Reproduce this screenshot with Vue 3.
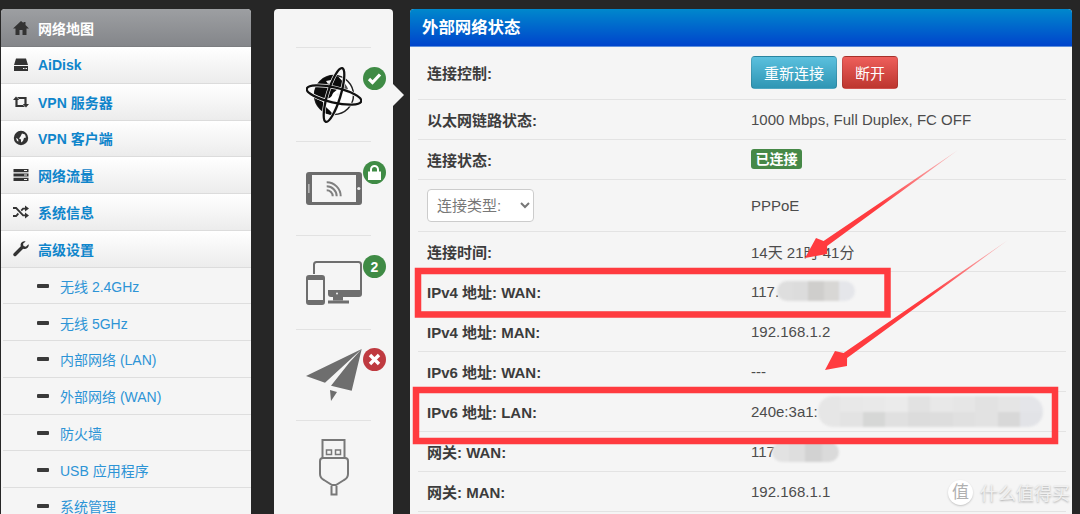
<script setup>
const menu = [
  { label: "网络地图", active: true, icon: "M8 1 0 8.5h2.5V15h4v-5h3v5h4V8.5H16l-3.5-3.5V2h-2v1z" },
  { label: "AiDisk", icon: "M3 1.5h10L15 8H1zM1 9h14v5H1zM10 11v1h1.5v-1zM12.5 11v1H14v-1z" },
  { label: "VPN 服务器", icon: "M3 2.5 6.2 6H4.6v5H10l2 2H2.4V6H0zM13 13.5 9.8 10h1.6V5H6L4 3h9.6v7H16z" },
  { label: "VPN 客户端", icon: "M8 .8a7.2 7.2 0 1 0 0 14.4A7.2 7.2 0 0 0 8 .8zM9 3.5l3 1 1 3-2 .5-1 3-2 1.5v-3L6 8.5 7.5 6.5zM3 8l2 1 .5 2.5L4 11z" },
  { label: "网络流量", icon: "M.5 2h15v3.2H.5zM.5 6.4h15v3.2H.5zM.5 10.8h15V14H.5zM11 3v1h3V3zM11 7.500v1h3v-1zM11 11.900v1h3v-1z" },
  { label: "系统信息", icon: "M0 3h3.500l7 7.500H12V8.500L16 11.500 12 14.500v-2.200H9.700L2.800 5H0zM0 11h2.800l2-2.200L6 10.200 3.500 13H0zM9.700 3.700H12V1.500L16 4.500 12 7.500V5.500H10.500L8.800 7.300 7.600 6z" },
  { label: "高级设置", icon: "M15.500 3.200 12.800 5.700 10.500 5 10 2.800 12.600.4C10.500-.3 8.200.8 7.700 3c-.2.8-.1 1.600.1 2.300L.8 12.300c-.8.800-.8 1.800 0 2.500.7.700 1.700.7 2.400 0l7-7c2.600.7 5.200-.7 5.500-3.200.1-.5 0-1 -.2-1.400z" }
];

const subMenu = ["无线 2.4GHz", "无线 5GHz", "内部网络 (LAN)", "外部网络 (WAN)", "防火墙", "USB 应用程序", "系统管理"];

const rows = [
  { label: "以太网链路状态:", value: "1000 Mbps, Full Duplex, FC OFF" },
  { label: "连接状态:", tag: "已连接" },
  { label: "连接类型:", value: "PPPoE", select: true },
  { label: "连接时间:", value: "14天 21时 41分" },
  { label: "IPv4 地址: WAN:", value: "117.", smear: "wan4" },
  { label: "IPv4 地址: MAN:", value: "192.168.1.2" },
  { label: "IPv6 地址: WAN:", value: "---" },
  { label: "IPv6 地址: LAN:", value: "240e:3a1:", smear: "lan6" },
  { label: "网关: WAN:", value: "117", smear: "gw" },
  { label: "网关: MAN:", value: "192.168.1.1" }
];

const smears = {
  wan4: [["#dedede", "#dcdcdc", "#cfcecc", "#d8d7d5", "#e5e6ea"]],
  lan6: [
    ["#e6e6e6", "#e8e8e8", "#e9e9e9", "#ebebeb", "#e2e2e2", "#e8e8e8", "#e6e6e6", "#e2e2e2", "#e5e5e5", "#e4e5e9"],
    ["#e6e6e6", "#e3e3e3", "#d6d7d6", "#e0e0e0", "#dcdcdc", "#dddddd", "#e0e0e0", "#e2e2e2", "#d8d8d8", "#e2e3e7"]
  ],
  gw: [["#e2e2e2", "#dedede", "#d2d2d2", "#dadada"]]
};
</script>

<template>
  <div class="page">
    <nav class="sidebar">
      <a v-for="item in menu" :key="item.label" class="menu-item" :class="{ active: item.active }">
        <svg class="menu-icon" viewBox="0 0 16 16"><path :d="item.icon" fill-rule="evenodd" /></svg>
        {{ item.label }}
      </a>
      <a v-for="item in subMenu" :key="item" class="sub-item">
        <i class="sub-dash"></i>
        {{ item }}
      </a>
    </nav>

    <div class="nodes">
      <div class="node">
        <svg width="56" height="56" viewBox="0 0 56 56">
          <circle cx="28" cy="28" r="19.500" fill="#fff" stroke="#222" stroke-width="1.500" />
          <path d="M8.500 28C8.500 16 18 8 29 8.500c5 1 5 4 8 6 2 3-2 5-5 7-2 3-5 3-6 7-1 2-3 3-5 3-5 1-9 0-12.500-3.500z" fill="#0c0c0c" />
          <path d="M9 31c1 9 8 16 18 17-2-5-8-7-10-13z" fill="#0c0c0c" />
          <path d="M36 15c3 1 5 4 6 7l-4 2-3-4z" fill="#555" />
          <path d="M20 14l5-1 1 2-4 2zM30 27l4-2 2 3-3 3z" fill="#eee" />
          <ellipse cx="28" cy="28" rx="28" ry="7.500" transform="rotate(13 28 28)" fill="none" stroke="#f5f5f5" stroke-width="3.600" />
          <ellipse cx="28" cy="28" rx="28" ry="6.500" transform="rotate(-73 28 28)" fill="none" stroke="#f5f5f5" stroke-width="3.600" />
          <ellipse cx="28" cy="28" rx="28" ry="7.500" transform="rotate(13 28 28)" fill="none" stroke="#111" stroke-width="2.300" />
          <ellipse cx="28" cy="28" rx="28" ry="6.500" transform="rotate(-73 28 28)" fill="none" stroke="#111" stroke-width="2.300" />
        </svg>
        <span class="badge ok">
          <svg width="15" height="13" viewBox="0 0 15 13"><path d="M2 7l3.500 3.500L13 2.500" fill="none" stroke="#fff" stroke-width="3.200" /></svg>
        </span>
        <span class="pointer"></span>
      </div>
      <div class="node">
        <svg width="56" height="33" viewBox="0 0 56 33">
          <rect width="56" height="33" rx="3" fill="#6c6c6c" />
          <rect x="6" y="3" width="44" height="27" fill="#f5f5f5" />
          <rect x="2" y="12" width="1.600" height="9" fill="#b5b5b5" />
          <circle cx="52.800" cy="16.500" r="1.600" fill="#eee" />
          <g fill="none" stroke="#808080" stroke-width="2">
            <path d="M20.700 10.300A14 14 0 0 1 34.700 24.300" />
            <path d="M20.700 14.300A10 10 0 0 1 30.700 24.300" />
            <path d="M20.700 18.300A6 6 0 0 1 26.700 24.300" />
          </g>
        </svg>
        <span class="badge ok">
          <svg width="13" height="15" viewBox="0 0 13 15"><path d="M0 6.500h13V15H0z" fill="#fff" /><path d="M3 7V4.500a3.500 3.500 0 0 1 7 0V7" fill="none" stroke="#fff" stroke-width="2" /></svg>
        </span>
      </div>
      <div class="node">
        <svg width="56" height="44" viewBox="0 0 56 44">
          <path d="M8 13V3.500Q8 1 10.500 1H52.500Q55 1 55 3.500V30" fill="none" stroke="#6e6e6e" stroke-width="2" />
          <path d="M22 29h34v4q0 3-3 3H25q-3 0-3-3z" fill="#6e6e6e" />
          <rect x="27" y="36" width="10" height="3.500" fill="#6e6e6e" />
          <rect x="22" y="39.500" width="21" height="3" fill="#6e6e6e" />
          <circle cx="31" cy="32.500" r="1" fill="#f0f0f0" />
          <rect x="1" y="15" width="17" height="28" rx="2" fill="none" stroke="#6e6e6e" stroke-width="2" />
          <path d="M1 15h17v4H1zM1 39h17v4H1z" fill="#6e6e6e" />
        </svg>
        <span class="badge ok count">2</span>
      </div>
      <div class="node node-short">
        <svg width="56" height="52" viewBox="0 0 56 52">
          <path d="M0 27 55.700 0 19 33.700zM55.700 0 45.700 41.700 25 36.700 43 14zM24 41l7 2-6 9z" fill="#6e6e6e" />
        </svg>
        <span class="badge bad">
          <svg width="13" height="13" viewBox="0 0 13 13"><path d="M2 2l9 9M11 2l-9 9" fill="none" stroke="#fff" stroke-width="3.400" /></svg>
        </span>
      </div>
      <div class="node">
        <svg width="30" height="57" viewBox="0 0 30 57">
          <g fill="none" stroke="#787878" stroke-width="2">
            <path d="M3.500 19V1h22v18" />
            <path d="M1 22q0-3 3-3h22q3 0 3 3v13q0 4-4 6l-8 5h-4l-8-5q-4-2-4-6z" />
            <path d="M12.500 47v8.500h5V47" />
          </g>
          <rect x="7.500" y="11" width="5" height="4.500" fill="none" stroke="#787878" stroke-width="1.500" />
          <rect x="16.500" y="11" width="5" height="4.500" fill="none" stroke="#787878" stroke-width="1.500" />
        </svg>
      </div>
    </div>

    <section class="panel">
      <header class="panel-head">外部网络状态</header>
      <div class="panel-body">
        <div class="row row-first">
          <span class="row-label">连接控制:</span>
          <span class="row-value actions">
            <button type="button" class="btn btn-info">重新连接</button>
            <button type="button" class="btn btn-danger">断开</button>
          </span>
        </div>
        <div v-for="row in rows" :key="row.label" class="row" :class="{ 'row-select': row.select }">
          <span class="row-label">
            <select v-if="row.select" class="type-select"><option>{{ row.label }}</option></select>
            <template v-else>{{ row.label }}</template>
          </span>
          <span class="row-value">
            <span v-if="row.tag" class="tag">{{ row.tag }}</span>
            {{ row.value }}
            <span v-if="row.smear" class="smear" :class="`smear-${row.smear}`">
              <span v-for="(line, i) in smears[row.smear]" :key="i" class="smear-line">
                <i v-for="(c, j) in line" :key="j" :style="{ background: c }"></i>
              </span>
            </span>
          </span>
        </div>
      </div>
    </section>

    <svg class="marks" width="1080" height="514" viewBox="0 0 1080 514">
      <defs>
        <linearGradient id="tail-a" gradientUnits="userSpaceOnUse" x1="958" y1="150" x2="880" y2="205">
          <stop offset="0" stop-color="#ff3b3f" stop-opacity=".25" />
          <stop offset="1" stop-color="#ff3b3f" />
        </linearGradient>
        <linearGradient id="tail-b" gradientUnits="userSpaceOnUse" x1="1008" y1="240" x2="930" y2="295">
          <stop offset="0" stop-color="#ff3b3f" stop-opacity=".25" />
          <stop offset="1" stop-color="#ff3b3f" />
        </linearGradient>
      </defs>
      <rect x="418" y="271" width="469.500" height="43.500" fill="none" stroke="#ff3b3f" stroke-width="6.500" />
      <rect x="416" y="390" width="639" height="51" fill="none" stroke="#ff3b3f" stroke-width="6.500" />
      <polygon points="958,150 823.600,241 816,238 805,258 827,254 827.100,246" fill="url(#tail-a)" />
      <polygon points="1008,240 843.600,353 835,351 825,370 847,366 847.100,358" fill="url(#tail-b)" />
    </svg>

    <div class="watermark">
      <span class="watermark-logo">值</span>
      什么值得买
    </div>
  </div>
</template>

<style>
html,
body {
  margin: 0;
  background: #262626;
}
</style>

<style scoped>
.page {
  position: relative;
  display: flex;
  align-items: flex-start;
  width: 1080px;
  height: 514px;
  padding: 9px 8px 0 1px;
  box-sizing: border-box;
  overflow: hidden;
  font-family: "Liberation Sans", "Noto Sans CJK SC", sans-serif;
  font-size: 14px;
  color: #444;
}

.sidebar {
  flex: none;
  width: 250px;
  height: 505px;
  overflow: hidden;
  border-radius: 4px 4px 0 0;
  background: #f5f5f5;
}

.menu-item {
  display: flex;
  align-items: center;
  gap: 9px;
  height: 36.75px;
  padding-left: 12px;
  box-sizing: border-box;
  border-bottom: 1px solid #dcdcdc;
  background: linear-gradient(#fff, #ececec);
  color: #0f85cb;
  font-weight: bold;
}

.menu-item.active {
  height: 38px;
  border-bottom: 1px solid #7c7e81;
  background: linear-gradient(#9d9fa2, #84868a);
  color: #fff;
}

.menu-icon {
  flex: none;
  width: 16px;
  height: 16px;
  fill: #333;
}

.sub-item {
  display: flex;
  align-items: center;
  gap: 11px;
  height: 36.75px;
  margin-left: 2px;
  padding: 1px 0 0 34px;
  box-sizing: border-box;
  border-bottom: 1px solid #dedede;
  color: #2d94d6;
}

.sub-dash {
  width: 12px;
  height: 4px;
  border-radius: 1px;
  background: #3a3a3a;
}

.nodes {
  flex: none;
  width: 119px;
  height: 505px;
  margin-left: 23px;
  padding-top: 38px;
  box-sizing: border-box;
  border-radius: 4px 4px 0 0;
  background: #f5f5f5;
}

.node {
  position: relative;
  display: flex;
  align-items: center;
  justify-content: center;
  height: 94px;
  margin: 0 22px;
  box-sizing: border-box;
  border-top: 1px solid #e2e2e2;
}

.node-short {
  height: 91px;
}

.badge {
  position: absolute;
  top: 19px;
  right: -15px;
  display: flex;
  align-items: center;
  justify-content: center;
  width: 23px;
  height: 23px;
  border-radius: 50%;
  color: #fff;
  font-weight: bold;
}

.badge.ok {
  background: #3f8b45;
}

.badge.bad {
  top: 18px;
  background: #bf3a40;
}

.pointer {
  position: absolute;
  top: 36px;
  right: -33px;
  border-style: solid;
  border-width: 11px 0 11px 11px;
  border-color: transparent transparent transparent #f5f5f5;
}

.panel {
  flex: none;
  width: 662px;
  height: 505px;
  margin-left: 17px;
  overflow: hidden;
  border-radius: 4px 4px 0 0;
  background: #f5f5f5;
}

.panel-head {
  height: 38px;
  padding-left: 12px;
  box-sizing: border-box;
  border-bottom: 1px solid #5d8fdc;
  background: linear-gradient(#0088cc, #0044cc);
  color: #fff;
  font-size: 16.4px;
  font-weight: bold;
  line-height: 37px;
}

.panel-body {
  padding: 0 6px 0 8px;
}

.row {
  display: flex;
  align-items: center;
  height: 40.1px;
  padding-left: 9px;
  box-sizing: border-box;
  border-bottom: 1.5px solid #e3e3e3;
}

.row-first {
  height: 52.5px;
}

.row-select {
  height: 52px;
}

.row-label {
  flex: none;
  width: 324px;
  color: #3c3c3c;
  font-size: 15px;
  font-weight: bold;
}

.row-value {
  display: flex;
  align-items: center;
  color: #4c4c4c;
  font-size: 15px;
}

.actions {
  gap: 5px;
}

.btn {
  height: 33px;
  padding: 0 12px;
  border: 1px solid rgba(0, 0, 0, 0.12);
  border-radius: 4px;
  color: #fff;
  font: inherit;
}

.btn-info {
  background: linear-gradient(#5bc0de, #2f96b4);
}

.btn-danger {
  background: linear-gradient(#ee5f5b, #bd362f);
}

.tag {
  padding: 0 4.5px;
  border-radius: 3px;
  background: #468847;
  color: #fff;
  font-size: 14px;
  font-weight: bold;
  line-height: 20px;
}

.type-select {
  width: 107px;
  height: 33px;
  padding-left: 5px;
  border: 1px solid #ccc;
  border-radius: 4px;
  background: #fff;
  color: #777;
  font: 15px "Liberation Sans", "Noto Sans CJK SC", sans-serif;
}

.smear {
  display: flex;
  flex-direction: column;
  overflow: hidden;
  border-radius: 10px;
  filter: blur(0.8px);
}

.smear-line {
  display: flex;
  flex: 1;
}

.smear-line i {
  flex: 1;
}

.smear-wan4 {
  width: 78px;
  height: 20px;
  margin-left: -2px;
}

.smear-lan6 {
  width: 225px;
  height: 31px;
  border-radius: 15px;
}

.smear-gw {
  width: 67px;
  height: 20px;
  margin-left: -3px;
}

.marks {
  position: absolute;
  top: 0;
  left: 0;
  pointer-events: none;
}

.watermark {
  position: absolute;
  right: 10px;
  bottom: 9px;
  display: flex;
  align-items: center;
  gap: 7px;
  color: #f0f0f0;
  font-size: 18px;
  text-shadow: 0 1px 2px #a8a8a8;
}

.watermark-logo {
  width: 25px;
  height: 25px;
  border-radius: 50%;
  background: #fff;
  box-shadow: 0 1px 2px #c4c4c4;
  color: #b0b0b0;
  font-size: 17px;
  line-height: 25px;
  text-align: center;
  text-shadow: none;
}
</style>
